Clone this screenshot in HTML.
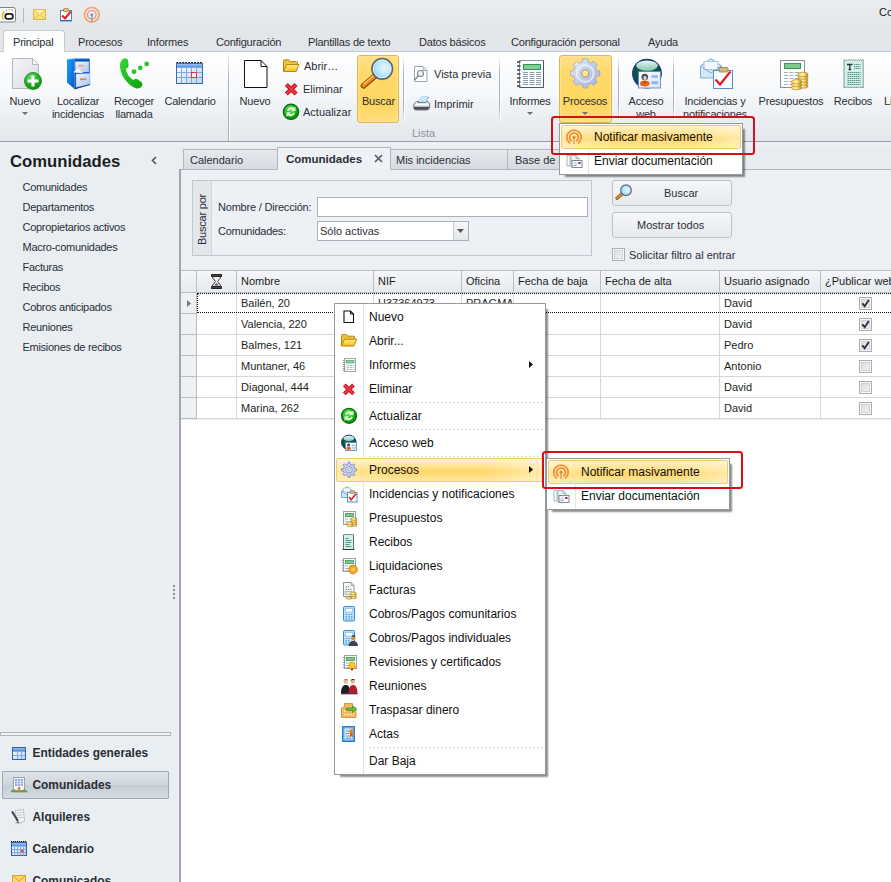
<!DOCTYPE html>
<html lang="es">
<head>
<meta charset="utf-8">
<title>Comunidades</title>
<style>
*{box-sizing:border-box;margin:0;padding:0}
html,body{width:891px;height:882px;overflow:hidden;background:#fff}
body{font-family:"Liberation Sans",sans-serif;font-size:11px;color:#2b2f36;position:relative}
.abs{position:absolute}
.t{position:absolute;white-space:nowrap;line-height:13px}
.c{text-align:center;letter-spacing:-.2px}
svg{position:absolute;overflow:visible}
/* title + tabs */
#titlebar{left:0;top:0;width:891px;height:52px;background:linear-gradient(#eaecef 0,#e4e7ea 26px,#e2e5e9 52px)}
#ribbon{left:0;top:51px;width:891px;height:91px;background:linear-gradient(#ffffff 0,#f6f8fa 40px,#e9edf1 70px,#e4e8ed 88px);border-top:1px solid #c5cad1;border-bottom:1px solid #989ea6}
#ribbonshadow{left:0;top:142px;width:891px;height:8px;background:linear-gradient(#eef1f5,#e8ecf0)}
#tabP{left:3px;top:30px;width:62px;height:22px;background:linear-gradient(#fbfcfd,#ffffff);border:1px solid #c5cad1;border-bottom:none;border-radius:3px 3px 0 0}
.rt{top:36px;font-size:11px;letter-spacing:-.2px}
.rsep{width:1px;top:56px;height:66px;background:linear-gradient(rgba(170,176,186,0),#aab0ba 25%,#aab0ba 75%,rgba(170,176,186,0));box-shadow:1px 0 0 rgba(255,255,255,.8)}
.gsep{width:1px;top:53px;height:88px;background:linear-gradient(rgba(168,173,180,.15),#a8adb4 35%);box-shadow:1px 0 0 rgba(255,255,255,.85)}
.hot{background:linear-gradient(#ffe089 0,#ffd96b 25%,#ffd660 75%,#ffe07f 100%);border:1px solid #dbb654;border-radius:3px;box-shadow:inset 0 0 0 1px rgba(255,232,160,.6)}
/* left nav */
#nav{left:0;top:149px;width:179px;height:733px;background:#e9eef3}
#navborder{z-index:1;left:179px;top:169px;width:2px;height:713px;background:linear-gradient(90deg,#a8adb3,#9b9fa5)}
.ni{left:22.500px;font-size:11px;letter-spacing:-.28px}
.nb{left:32.5px;font-size:11.9px;font-weight:bold;color:#2a2e35;line-height:15px}
/* main */
#main{left:179px;top:149px;width:712px;height:733px;background:#e8ecf0}
#white{left:181px;top:420px;width:710px;height:463px;background:#fff}
.tab{top:149px;height:21px;background:linear-gradient(#e6e9ed,#d6dae0);border:1px solid #b2b7be;border-bottom:none}
.btn{background:linear-gradient(#f5f7f9,#e7eaee);border:1px solid #bcc1c8;border-radius:3px}
.gh{top:271px;height:22px;background:linear-gradient(#f4f6f8,#e7eaee);border-right:1px solid #b9bec5;border-bottom:1px solid #b9bec5}
.gc{height:21px;background:#fff;border-right:1px solid #d3d6da;border-bottom:1px solid #d3d6da}
.gt{font-size:11px;color:#1c1e22}
.cb{width:13px;height:13px;border:1px solid #a9aeb5;background:#f6f7f8;box-shadow:inset 0 0 0 1px #f6f7f8,inset 0 0 0 2px #cfd2d6}
.cb::after{content:"";position:absolute;left:2px;top:2px;width:7px;height:7px;background:linear-gradient(135deg,#dcdee1,#f0f1f2)}
/* menus */
.menu{background:#fff;border:1px solid #94989f;box-shadow:4px 4px 1.500px -2px rgba(0,0,0,.44)}
.mi{font-family:"Liberation Sans",sans-serif;font-size:12px;color:#111;line-height:15px}
.msep{height:1px;background:repeating-linear-gradient(90deg,#d3d6db 0,#d3d6db 2px,transparent 2px,transparent 4px)}
.mhot{background:linear-gradient(90deg,rgba(255,250,225,.45),rgba(255,250,225,0) 28%,rgba(255,250,225,0) 72%,rgba(255,250,225,.5)),linear-gradient(#fff1c4 0,#ffe08a 40%,#ffd767 55%,#ffe7a3 100%);border:1px solid #efcb6a;border-radius:2px}
.red{border:2px solid #d41018;border-radius:3.500px}
</style>
</head>
<body>
<div id="titlebar" class="abs"></div>
<div id="ribbon" class="abs"></div>
<div id="ribbonshadow" class="abs"></div>
<div id="tabP" class="abs"></div>

<!-- quick access icons -->
<svg style="left:0;top:0" width="120" height="30" viewBox="0 0 120 30">
<rect x="-2" y="7.500" width="17.500" height="14.500" rx="2" fill="#fbfbfb" stroke="#7f848b"/>
<path d="M3.200 19.500c-1.200-3-.8-6 1-8.500" stroke="#e8b820" stroke-width="1.500" fill="none"/>
<circle cx="6.500" cy="10.300" r=".7" fill="#8a8f96"/><circle cx="9.300" cy="9.600" r=".7" fill="#c8a030"/><circle cx="12" cy="10.300" r=".7" fill="#8a8f96"/>
<rect x="5.300" y="13.800" width="7.600" height="5" rx="2.400" fill="#fff" stroke="#1c1c1c" stroke-width="1.700"/>
<path d="M23.500 8v15" stroke="#b4b9c0"/>
<rect x="33.500" y="9.500" width="12" height="10" fill="#fbe07a" stroke="#e0b23a" stroke-width=".9"/>
<path d="M34 10l5.500 5 5.500-5M34 19l4.200-4.200M45 19l-4.200-4.200" stroke="#e0b23a" stroke-width=".8" fill="none"/>
<path d="M34.200 10h10.600l-5.300 4.600z" fill="#fdf0b0"/>
<rect x="60.500" y="10.500" width="11" height="10.500" fill="#f6f8fb" stroke="#5a7fb8"/>
<path d="M61 20.500h10" stroke="#3a64a8" stroke-width="1"/>
<rect x="63.500" y="8.500" width="5" height="3" rx=".8" fill="#dcc078" stroke="#a08038" stroke-width=".8"/>
<path d="M62.200 15.500l2.800 3 5.800-7" stroke="#e02418" stroke-width="2" fill="none"/>
<g transform="translate(91.800 14.800)" fill="none">
<circle r="7.300" stroke="#f2a464" stroke-width="1.700"/>
<circle r="4.300" stroke="#e88a82" stroke-width="1.200"/>
<path d="M0 0v7.500" stroke="#a0a4ac" stroke-width="1.600"/>
<circle r="1.400" fill="#8c9098"/></g>
</svg>
<div class="t" style="left:879px;top:6px;font-size:11px;color:#1a1a1a">Co</div>
<!-- ribbon tabs -->
<div class="t rt" style="left:13px">Principal</div>
<div class="t rt" style="left:78px">Procesos</div>
<div class="t rt" style="left:147px">Informes</div>
<div class="t rt" style="left:216px">Configuración</div>
<div class="t rt" style="left:308px">Plantillas de texto</div>
<div class="t rt" style="left:419px">Datos básicos</div>
<div class="t rt" style="left:511px">Configuración personal</div>
<div class="t rt" style="left:648px">Ayuda</div>
<!-- hot buttons -->
<div class="abs hot" style="left:357px;top:55px;width:42px;height:68px"></div>
<div class="abs hot" style="left:559px;top:55px;width:53px;height:68px"></div>
<!-- separators -->
<div class="abs gsep" style="left:228px"></div>
<div class="abs rsep" style="left:403px"></div>
<div class="abs rsep" style="left:499px"></div>
<div class="abs rsep" style="left:618px"></div>
<div class="abs rsep" style="left:673px"></div>
<!-- big buttons text -->
<div class="t c" style="left:0;width:50px;top:95px">Nuevo</div>
<div class="t c" style="left:48px;width:60px;top:95px">Localizar<br>incidencias</div>
<div class="t c" style="left:104px;width:60px;top:95px">Recoger<br>llamada</div>
<div class="t c" style="left:160px;width:60px;top:95px">Calendario</div>
<div class="t c" style="left:230px;width:50px;top:95px">Nuevo</div>
<div class="t" style="left:304px;top:60px">Abrir…</div>
<div class="t" style="left:303px;top:83px">Eliminar</div>
<div class="t" style="left:303px;top:106px">Actualizar</div>
<div class="t c" style="left:357px;width:43px;top:95px">Buscar</div>
<div class="t" style="left:434px;top:68px">Vista previa</div>
<div class="t" style="left:434px;top:98px">Imprimir</div>
<div class="t" style="left:412px;top:127px;color:#8c939c">Lista</div>
<div class="t c" style="left:500px;width:60px;top:95px">Informes</div>
<div class="t c" style="left:555px;width:60px;top:95px">Procesos</div>
<div class="t c" style="left:621px;width:50px;top:95px">Acceso<br>web</div>
<div class="t c" style="left:675px;width:80px;top:95px">Incidencias y<br>notificaciones</div>
<div class="t c" style="left:751px;width:80px;top:95px">Presupuestos</div>
<div class="t c" style="left:823px;width:60px;top:95px">Recibos</div>
<div class="t" style="left:884px;top:95px">Li</div>
<!-- dropdown arrows -->
<svg style="left:22px;top:112px" width="6" height="3"><path d="M0 0h6L3 3z" fill="#6a6f78"/></svg>
<svg style="left:527px;top:112px" width="6" height="3"><path d="M0 0h6L3 3z" fill="#6a6f78"/></svg>
<svg style="left:582px;top:112px" width="6" height="3"><path d="M0 0h6L3 3z" fill="#6a6f78"/></svg>

<svg style="left:0;top:0" width="891" height="150" viewBox="0 0 891 150">
<defs>
<linearGradient id="gPage" x1="0" y1="0" x2="1" y2="1"><stop offset="0" stop-color="#f4f5f8"/><stop offset="1" stop-color="#d9dce4"/></linearGradient>
<radialGradient id="gGreen" cx=".4" cy=".3" r=".8"><stop offset="0" stop-color="#6be06b"/><stop offset=".6" stop-color="#18a818"/><stop offset="1" stop-color="#0b7d0b"/></radialGradient>
<linearGradient id="gBlue" x1="0" y1="0" x2="1" y2="1"><stop offset="0" stop-color="#18a0f8"/><stop offset=".6" stop-color="#0c78e0"/><stop offset="1" stop-color="#0a54b8"/></linearGradient>
<linearGradient id="gDrawer" x1="0" y1="0" x2="1" y2="1"><stop offset="0" stop-color="#f2f8ff"/><stop offset="1" stop-color="#a8c4ea"/></linearGradient>
<linearGradient id="gFolder" x1="0" y1="0" x2="0" y2="1"><stop offset="0" stop-color="#fff08a"/><stop offset="1" stop-color="#f8bc18"/></linearGradient>
<radialGradient id="gLens" cx=".6" cy=".45" r=".75"><stop offset="0" stop-color="#e8f8fe"/><stop offset=".5" stop-color="#b4e6f8"/><stop offset="1" stop-color="#6cc4ec"/></radialGradient>
<linearGradient id="gGear" x1="0" y1="0" x2="1" y2="1"><stop offset="0" stop-color="#f2f5fb"/><stop offset=".45" stop-color="#c3cfec"/><stop offset="1" stop-color="#a3b1d8"/></linearGradient>
<radialGradient id="gGlobe" cx=".45" cy=".25" r=".85"><stop offset="0" stop-color="#8fd8c0"/><stop offset=".35" stop-color="#2a7a78"/><stop offset=".75" stop-color="#144268"/><stop offset="1" stop-color="#0c2848"/></radialGradient>
<linearGradient id="gCal" x1="0" y1="0" x2="1" y2="1"><stop offset="0" stop-color="#ffffff"/><stop offset="1" stop-color="#b8d4f4"/></linearGradient>
<radialGradient id="gGlobe2" cx=".5" cy=".45" r=".6"><stop offset="0" stop-color="#1c7a4a"/><stop offset=".6" stop-color="#0c5a3a"/><stop offset=".85" stop-color="#0c4a6a"/><stop offset="1" stop-color="#1c58a8"/></radialGradient>
<linearGradient id="gGloss" x1="0" y1="0" x2="0" y2="1"><stop offset="0" stop-color="#ffffff" stop-opacity=".95"/><stop offset="1" stop-color="#a8e8e0" stop-opacity=".75"/></linearGradient>
<linearGradient id="gCard" x1="0" y1="0" x2="1" y2="1"><stop offset="0" stop-color="#ffffff"/><stop offset="1" stop-color="#d4e4f8"/></linearGradient>
<linearGradient id="gCalH" x1="0" y1="0" x2="0" y2="1"><stop offset="0" stop-color="#9cc4f4"/><stop offset="1" stop-color="#4a8cdc"/></linearGradient>
<linearGradient id="gPhone" x1="0" y1="0" x2="1" y2="1"><stop offset="0" stop-color="#3cd83c"/><stop offset=".5" stop-color="#1cbc1c"/><stop offset="1" stop-color="#12a012"/></linearGradient>
<linearGradient id="gGold" x1="0" y1="0" x2="1" y2="0"><stop offset="0" stop-color="#f8d060"/><stop offset=".5" stop-color="#fff0a0"/><stop offset="1" stop-color="#c89018"/></linearGradient>
</defs>
<!-- Nuevo (page + plus) -->
<path d="M12.500 58.500h20l6 6v24h-26z" fill="url(#gPage)" stroke="#b4b7bf"/>
<path d="M32.500 58.500v6h6z" fill="#fafbfc" stroke="#b4b7bf"/>
<circle cx="33" cy="81" r="8.500" fill="url(#gGreen)" stroke="#0e8a0e" stroke-width=".8"/>
<path d="M33 75.500v11M27.500 81h11" stroke="#fff" stroke-width="3"/>
<!-- Localizar (file cabinet) -->
<path d="M67 59.600l7.500-.8v30.200l-7.500-6.500z" fill="url(#gBlue)"/>
<path d="M74.500 58.800h15.200v25.700l-15.200 4.500z" fill="#0c4cae"/>
<path d="M67 59.600l7.500-.8h15.200" fill="none" stroke="#4aa6f6" stroke-width=".8"/>
<path d="M75.300 61.500h13.600v10.500l-13.600.8z" fill="url(#gDrawer)"/>
<rect x="78.300" y="64.800" width="5.400" height="1.700" fill="#e6a488"/>
<path d="M73.300 72.300l4.500-4 5.200 4.600z" fill="#f6fafe"/>
<path d="M76 74l14-.8v11.800l-14 2.200z" fill="url(#gDrawer)" stroke="#7aa4dc" stroke-width=".5"/>
<path d="M80 78.500l6-.3v1.700l-6 .3z" fill="#e08a2c"/>
<path d="M74.500 89l15.200-4.500" stroke="#0a3a8c" stroke-width="1"/>
<!-- Recoger llamada (phone) -->
<path d="M124 58.500c2.500-1 4 .5 4.200 3l.3 4c.1 1.800-1 2.800-2.700 3.200 .8 5 3.500 9 7.700 11.500 1.200-1.500 2.800-1.800 4.300-.8l3.200 2.300c1.800 1.300 2 3.300.2 5.300-3 2.800-7.500 1.200-12-2.800-6-5.500-9.500-13-9.200-19.500 .2-3 1.500-5.200 4-6.200z" fill="url(#gPhone)"/>
<circle cx="134" cy="71.700" r="2.400" fill="#2cc42c"/><circle cx="140.300" cy="67.800" r="2.400" fill="#2cc42c"/><circle cx="146.700" cy="64" r="2.400" fill="#2cc42c"/>
<!-- Calendario -->
<rect x="176.500" y="63.500" width="26" height="20" fill="url(#gCal)" stroke="#3a6ab4"/>
<rect x="177" y="64" width="25" height="3.500" fill="url(#gCalH)"/>
<path d="M176.500 62.500h26.500" stroke="#111" stroke-width="1.200" stroke-dasharray="1.700 1.250"/>
<path d="M181.500 68v15M186.500 68v15M191.500 68v15M196.500 68v15M177 72.500h25M177 77.500h25M177 67.500h25" stroke="#7da8e2" stroke-width="1"/>
<rect x="191.500" y="72.500" width="5" height="5" fill="#fdeeea" stroke="#e0382a" stroke-width="1"/>
<!-- Nuevo list (blank page) -->
<path d="M244.500 60.500h16.500l6 6v21h-22.500z" fill="#fff" stroke="#111"/>
<path d="M261 60.500v6h6" fill="none" stroke="#111"/>
<!-- Abrir (folder) -->
<path d="M283.500 71.500v-10.500c0-.8.500-1.200 1.200-1.200h4l1.500 1.800h6.300c.7 0 1 .4 1 1v2" fill="#f2c040" stroke="#b8860c"/>
<path d="M283.500 71.500l3-7h12.500l-3 7z" fill="url(#gFolder)" stroke="#b8860c"/>
<!-- Eliminar (red X) -->
<path d="M286.300 84.500l9.800 9.600M296.100 84.500l-9.800 9.600" stroke="#c4121a" stroke-width="4.200"/><path d="M286.600 84.800l9.200 9M295.800 84.800l-9.200 9" stroke="#ee3840" stroke-width="2.200"/>
<!-- Actualizar -->
<circle cx="291" cy="111.800" r="7.600" fill="url(#gGreen)" stroke="#0a7410" stroke-width="1.400"/>
<path d="M287 110.500a4.500 4.500 0 0 1 7-2.500l1.500-1.500v4.800h-4.800l1.600-1.600a2.800 2.800 0 0 0-3.600 1.300zM295 113a4.500 4.500 0 0 1-7 2.500l-1.500 1.500v-4.800h4.800l-1.600 1.600a2.800 2.800 0 0 0 3.600-1.300z" fill="#d6fac4"/>
<!-- Buscar (magnifier) -->
<path d="M375 76l-11.500 9.800" stroke="#7a4a14" stroke-width="5.600" stroke-linecap="round"/>
<path d="M375 75.800l-11.300 9.600" stroke="#f08c1e" stroke-width="3.800" stroke-linecap="round"/>
<path d="M374.500 74.800l-10.500 9" stroke="#ffc060" stroke-width="1.200" stroke-linecap="round"/>
<circle cx="382.200" cy="68.800" r="10.200" fill="url(#gLens)" stroke="#5f6670" stroke-width="1.800"/>
<circle cx="382.200" cy="68.800" r="9" fill="none" stroke="#e8f8ff" stroke-width="1" opacity=".8"/>
<!-- Vista previa -->
<path d="M414.500 66.500h8.500l4 4v11h-12.500z" fill="#fff" stroke="#a0a5ad"/>
<path d="M423 66.500v4h4" fill="none" stroke="#a0a5ad"/>
<circle cx="420.500" cy="73.500" r="3" fill="#eef4fa" stroke="#7f8a98" stroke-width="1.100"/>
<path d="M418.300 75.800l-4 4.500" stroke="#7f8a98" stroke-width="1.500"/>
<!-- Imprimir -->
<path d="M418 102.500l3.500-5.500h7l-2.500 5.500z" fill="#c4e4fa" stroke="#78aedc" stroke-width=".8"/>
<path d="M419.500 101l2.200-3.200h5" fill="none" stroke="#eef8ff" stroke-width=".8"/>
<path d="M413.800 104l2.700-2.500h2l-.5 1h8l.5-1h1.500l1.700 2.500v3.800l-1.800 2.200h-12.600l-1.500-1.500z" fill="#e4e7ec" stroke="#6a707a" stroke-width=".9"/>
<path d="M414 106.800h15.300v1l-1.600 2h-12.500l-1.200-1.200z" fill="#4a4f58"/>
<path d="M416 104.500h11" stroke="#fafbfc" stroke-width="1"/>
<!-- Informes (notebook) -->
<rect x="519.500" y="60.500" width="24" height="27" fill="#fbfdff" stroke="#8a929c"/>
<path d="M543.500 60.500v27h-24" fill="none" stroke="#4f5a66" stroke-width="1"/>
<path d="M517 62h3.500M517 66h3.500M517 70h3.500M517 74h3.500M517 78h3.500M517 82h3.500M517 86h3.500" stroke="#3c424a" stroke-width="1.300"/>
<rect x="523.500" y="64.500" width="17" height="5" fill="#86cc98" stroke="#2f9650"/>
<path d="M523 72.500h18M523 74.500h18M523 76.500h18M523 78.500h18M523 80.500h18M523 82.500h18M523 84.500h18" stroke="#8c9cac" stroke-width="1" stroke-dasharray="5 1.500"/>
<!-- Procesos (gear) -->
<g transform="translate(585.200 73.400)">
<path d="M-2.84 -11.45L-2.43 -14.60L2.43 -14.60L2.84 -11.45L6.09 -10.11L8.60 -12.04L12.04 -8.60L10.11 -6.09L11.45 -2.84L14.60 -2.43L14.60 2.43L11.45 2.84L10.11 6.09L12.04 8.60L8.60 12.04L6.09 10.11L2.84 11.45L2.43 14.60L-2.43 14.60L-2.84 11.45L-6.09 10.11L-8.60 12.04L-12.04 8.60L-10.11 6.09L-11.45 2.84L-14.60 2.43L-14.60 -2.43L-11.45 -2.84L-10.11 -6.09L-12.04 -8.60L-8.60 -12.04L-6.09 -10.11z" fill="url(#gGear)" stroke="#9aa4c4" stroke-width=".8" stroke-linejoin="round"/>
<circle r="8.400" fill="none" stroke="#eef1f9" stroke-width="2" opacity=".75"/>
<circle r="3.600" fill="#ffe596" stroke="#a89a70" stroke-width="1.100"/>
</g>
<!-- Acceso web (globe + card) -->
<circle cx="647" cy="73.600" r="14.300" fill="url(#gGlobe2)" stroke="#1c3f7c" stroke-width="1.300"/>
<ellipse cx="647" cy="65.600" rx="10.800" ry="5.200" fill="url(#gGloss)"/>
<rect x="638.500" y="71.500" width="22" height="16.500" fill="url(#gCard)" stroke="#5f80b8" stroke-width=".8"/>
<circle cx="644.800" cy="77" r="3.300" fill="#505056"/>
<ellipse cx="645" cy="78" rx="1.600" ry="1.900" fill="#dcdce0"/>
<ellipse cx="644.800" cy="83.400" rx="4.800" ry="3" fill="#e8641c"/>
<path d="M643.500 81l1.300 2.500 1.300-2.500" fill="none" stroke="#a83c08" stroke-width=".8"/>
<rect x="651.500" y="75.300" width="6.500" height="2.400" fill="#8cb6ea"/>
<rect x="651.500" y="81.200" width="6.500" height="3" fill="#8cb6ea"/>
<!-- Incidencias (envelope + clipboard) -->
<path d="M700.500 66l10.500-7.500 10.500 7.500v12h-21z" fill="#d4e8f8" stroke="#7ab0dc"/>
<rect x="704" y="61.500" width="14" height="8" fill="#f4f8fc" stroke="#9ac0e0" stroke-width=".8"/>
<path d="M700.500 66l10.500 7 10.500-7" fill="none" stroke="#7ab0dc"/>
<rect x="713.500" y="70.500" width="19" height="18" fill="#fafcfe" stroke="#5a8ed0"/>
<rect x="719" y="67.500" width="9" height="4.500" rx="1" fill="#d8b878" stroke="#9a7a3a" stroke-width=".8"/>
<path d="M715.500 79.500l4.500 5 10.500-13" fill="none" stroke="#e01c24" stroke-width="2.200"/>
<!-- Presupuestos -->
<rect x="780.500" y="60.500" width="24" height="27" fill="#fdfdfd" stroke="#8a9098"/>
<rect x="784.500" y="63.500" width="16" height="5" fill="#7cc890" stroke="#3c9a58"/>
<path d="M784 72.500h17M784 75.500h17M784 78.500h17M784 81.500h17M784 84.500h17" stroke="#a8aeb6" stroke-width="1.200" stroke-dasharray="4 1.500"/>
<g stroke="#a87410" stroke-width=".6">
<ellipse cx="803" cy="86" rx="5" ry="2.200" fill="url(#gGold)"/><ellipse cx="803" cy="83" rx="5" ry="2.200" fill="url(#gGold)"/><ellipse cx="803" cy="80" rx="5" ry="2.200" fill="url(#gGold)"/><ellipse cx="803" cy="77" rx="5" ry="2.200" fill="url(#gGold)"/><ellipse cx="803" cy="74.500" rx="5" ry="2.200" fill="url(#gGold)"/>
<ellipse cx="796.500" cy="87.500" rx="5" ry="2.200" fill="url(#gGold)"/><ellipse cx="796.500" cy="84.500" rx="5" ry="2.200" fill="url(#gGold)"/><ellipse cx="796.500" cy="81.800" rx="5" ry="2.200" fill="url(#gGold)"/>
</g>
<!-- Recibos -->
<path d="M844 59.500l1.200 1.200 1.200-1.200 1.200 1.200 1.200-1.200 1.200 1.200 1.200-1.200 1.200 1.200 1.200-1.200 1.200 1.200 1.200-1.200 1.200 1.200 1.200-1.200 1.200 1.200 1.200-1.200 1.200 1.200 1.200-1.200v28.500l-1.200-1.200-1.200 1.200-1.200-1.200-1.200 1.200-1.200-1.200-1.200 1.200-1.200-1.200-1.200 1.200-1.200-1.200-1.200 1.200-1.200-1.200-1.200 1.200-1.200-1.200-1.200 1.200-1.200-1.200-1.200 1.200z" fill="#d6efe8" stroke="#5a7a74" stroke-width=".7"/>
<path d="M847.500 72.500h13M847.500 74.500h13M847.500 76.500h13M847.500 78.500h13M847.500 80.500h13M847.500 82.500h13M847.500 84.500h13M854 64.500h6.500M854 66.500h6.500M854 68.500h6.500" stroke="#4f9488" stroke-width="1" stroke-dasharray="1.500 .5"/>
<path d="M847 64.500h5.500M849.800 64.500v5M848.500 69.500h2.600" stroke="#1a3a38" stroke-width="1.300"/>
</svg>


<div id="nav" class="abs"></div>
<div id="navborder" class="abs"></div>
<div id="main" class="abs"></div>
<div id="white" class="abs"></div>

<div class="t" style="left:10px;top:151px;font-size:16.700px;font-weight:bold;line-height:22px;color:#1e1e1e">Comunidades</div>
<svg style="left:151px;top:156px" width="6" height="9"><path d="M5 1L1.500 4.500 5 8" stroke="#555" stroke-width="1.600" fill="none"/></svg>
<div class="t ni" style="top:181px">Comunidades</div>
<div class="t ni" style="top:201px">Departamentos</div>
<div class="t ni" style="top:221px">Copropietarios activos</div>
<div class="t ni" style="top:241px">Macro-comunidades</div>
<div class="t ni" style="top:261px">Facturas</div>
<div class="t ni" style="top:281px">Recibos</div>
<div class="t ni" style="top:301px">Cobros anticipados</div>
<div class="t ni" style="top:321px">Reuniones</div>
<div class="t ni" style="top:341px">Emisiones de recibos</div>

<div class="abs" style="left:0;top:732px;width:171px;height:4px;border:1px solid #b0b5bc;background:#f2f4f7"></div>
<div class="abs" style="left:2px;top:771px;width:167px;height:28px;border:1px solid #9ea6b0;border-radius:1px;background:linear-gradient(#dfe4ea 0,#cfd5dc 50%,#c5ccd4 52%,#d6dbe1 100%)"></div>
<div class="t nb" style="top:746px">Entidades generales</div>
<div class="t nb" style="top:778px">Comunidades</div>
<div class="t nb" style="top:810px">Alquileres</div>
<div class="t nb" style="top:842px">Calendario</div>
<div class="t nb" style="top:874px">Comunicados</div>
<!-- splitter dots -->
<div class="abs" style="left:173px;top:585px;width:2px;height:14px;background:repeating-linear-gradient(#8a8d92 0,#8a8d92 2px,transparent 2px,transparent 4px)"></div>

<svg style="left:0;top:740px" width="180" height="142" viewBox="0 740 180 142">
<!-- Entidades generales (table) -->
<rect x="12.500" y="747.500" width="13" height="12" fill="url(#gCal)" stroke="#2f5eaa"/>
<rect x="13" y="748" width="12" height="3" fill="url(#gCalH)"/>
<path d="M13 751.500h12M13 755.500h12M17.500 752v7M21.500 752v7" stroke="#86aae0" stroke-width="1"/>
<!-- Comunidades (building) -->
<rect x="13.500" y="777.500" width="11" height="13" fill="#f4f6fa" stroke="#98a2b4"/>
<rect x="15" y="779" width="8" height="7" fill="#8ea8d4"/>
<path d="M17.500 779v7M20.500 779v7M15 781.500h8M15 783.800h8" stroke="#e8eef8" stroke-width=".8"/>
<rect x="17.800" y="787" width="2.600" height="4" fill="#e08a30"/>
<path d="M11 792c.8-2.800 4-3 5.800-.4h4.600c1.800-2.600 5-2.400 5.800.4z" fill="#62b83c" stroke="#3c8c24" stroke-width=".5"/>
<!-- Alquileres (docs + pen) -->
<path d="M15.500 810.500l8-1 1 12-8 2z" fill="#f4f5f8" stroke="#b0b4bc" stroke-width=".8"/>
<path d="M17 813l5.500-.7M17.200 815.500l5.500-.7M17.400 818l5.500-.7" stroke="#b8bcc4" stroke-width=".8"/>
<path d="M12 811.500l6 9.500" stroke="#3a3f48" stroke-width="2"/><path d="M18 821l1.200 2.500-2.400-1.300z" fill="#222"/>
<path d="M14 823.500c2 .5 5 .5 8-.5" stroke="#c8ccd2" stroke-width=".8" fill="none"/>
<!-- Calendario -->
<rect x="11.500" y="842.500" width="15" height="13" fill="url(#gCal)" stroke="#2f5eaa"/>
<rect x="12" y="843" width="14" height="3.500" fill="url(#gCalH)"/>
<path d="M11 841.500h16" stroke="#111" stroke-width="1.200" stroke-dasharray="1.200 .8"/>
<path d="M12 849.500h14M12 852.500h14M14.500 846.500v9M17.500 846.500v9M20.500 846.500v9M23.500 846.500v9" stroke="#86aae0" stroke-width="1"/>
<rect x="21" y="850" width="2.500" height="2.500" fill="#f04a30"/>
<!-- Comunicados (envelope) -->
<rect x="12.500" y="875.500" width="13" height="9" fill="#fbd86a" stroke="#d9a520"/>
<path d="M13 876l6 5 6-5" stroke="#d9a520" fill="none"/>
</svg>




<!-- doc tabs -->
<div class="abs tab" style="left:183px;width:95px"></div>
<div class="abs tab" style="left:390px;width:118px"></div>
<div class="abs tab" style="left:507px;width:120px"></div>
<div class="abs" style="left:181px;top:169px;width:710px;height:1px;background:#b2b7be"></div><div class="abs" style="left:181px;top:170px;width:710px;height:100px;background:#ecf0f4"></div>
<div class="abs" style="left:277px;top:147px;width:114px;height:23px;background:#eef1f5;border:1px solid #b2b7be;border-bottom:none"></div>
<div class="t" style="left:190px;top:154px">Calendario</div>
<div class="t" style="left:286px;top:153px;font-weight:bold;font-size:11.5px">Comunidades</div>
<svg style="left:374px;top:154px" width="9" height="9"><path d="M1 1l7 7M8 1L1 8" stroke="#575c64" stroke-width="1.700"/></svg>
<div class="t" style="left:396px;top:154px">Mis incidencias</div>
<div class="t" style="left:515px;top:154px">Base de c</div>
<!-- filter panel -->
<div class="abs" style="left:192px;top:180px;width:400px;height:76px;border:1px solid #c3c8cf;background:#edf0f4"></div>
<div class="abs" style="left:193px;top:181px;width:19px;height:74px;background:#e3e7ec;border-right:1px solid #d3d7dd"></div>
<div class="t" style="left:202px;top:220px;width:0;height:0;letter-spacing:-.2px"><div style="position:absolute;left:-30px;top:-7px;width:60px;height:13px;text-align:center;transform:rotate(-90deg)">Buscar por</div></div>
<div class="t" style="left:218px;top:201px;letter-spacing:-.2px">Nombre / Dirección:</div>
<div class="t" style="left:218px;top:225px;letter-spacing:-.25px">Comunidades:</div>
<div class="abs" style="left:317px;top:197px;width:271px;height:20px;background:#fff;border:1px solid #abb0b8"></div>
<div class="abs" style="left:317px;top:221px;width:152px;height:20px;background:#fff;border:1px solid #abb0b8"></div>
<div class="abs" style="left:453px;top:222px;width:15px;height:18px;background:linear-gradient(#f7f8fa,#e4e7eb);border-left:1px solid #c3c8cf"></div>
<svg style="left:457px;top:229px" width="7" height="4"><path d="M0 0h7L3.500 4z" fill="#555"/></svg>
<div class="t" style="left:320px;top:225px">Sólo activas</div>
<!-- buttons -->
<div class="abs btn" style="left:612px;top:180px;width:120px;height:26px"></div>
<div class="abs btn" style="left:612px;top:212px;width:120px;height:26px"></div>
<div class="t" style="left:664px;top:187px">Buscar</div>
<div class="t" style="left:637px;top:219px">Mostrar todos</div>
<div class="abs cb" style="left:612px;top:248px"></div>
<div class="t" style="left:629px;top:249px">Solicitar filtro al entrar</div>
<!-- grid -->
<div class="abs" style="left:180px;top:270px;width:711px;height:1px;background:#b9bec5"></div>
<div class="abs gh" style="left:181px;width:16px"></div>
<div class="abs gh" style="left:197px;width:40px"></div>
<div class="abs gh" style="left:237px;width:137px"></div><div class="t gt" style="left:241px;top:275px">Nombre</div>
<div class="abs gh" style="left:374px;width:88px"></div><div class="t gt" style="left:378px;top:275px">NIF</div>
<div class="abs gh" style="left:462px;width:52px"></div><div class="t gt" style="left:466px;top:275px">Oficina</div>
<div class="abs gh" style="left:514px;width:87px"></div><div class="t gt" style="left:518px;top:275px">Fecha de baja</div>
<div class="abs gh" style="left:601px;width:119px"></div><div class="t gt" style="left:605px;top:275px">Fecha de alta</div>
<div class="abs gh" style="left:720px;width:101px"></div><div class="t gt" style="left:724px;top:275px">Usuario asignado</div>
<div class="abs gh" style="left:821px;width:75px"></div><div class="t gt" style="left:825px;top:275px">¿Publicar web</div>
<div class="abs gh" style="left:181px;top:293px;width:16px;height:21px;background:#eef0f3"></div><div class="abs gc" style="left:197px;top:293px;width:40px;border-bottom-color:#fff"></div><div class="abs gc" style="left:237px;top:293px;width:137px;border-bottom-color:#fff"></div><div class="abs gc" style="left:374px;top:293px;width:88px;border-bottom-color:#fff"></div><div class="abs gc" style="left:462px;top:293px;width:52px;border-bottom-color:#fff"></div><div class="abs gc" style="left:514px;top:293px;width:87px;border-bottom-color:#fff"></div><div class="abs gc" style="left:601px;top:293px;width:119px;border-bottom-color:#fff"></div><div class="abs gc" style="left:720px;top:293px;width:101px;border-bottom-color:#fff"></div><div class="abs gc" style="left:821px;top:293px;width:75px;border-bottom-color:#fff"></div><div class="t gt" style="left:241px;top:297px">Bailén, 20</div><div class="t gt" style="left:378px;top:297px">H37364973</div><div class="t gt" style="left:466px;top:297px">PRAGMA</div><div class="t gt" style="left:724px;top:297px">David</div><div class="abs cb" style="left:859px;top:297px"></div><svg style="left:861px;top:299px" width="9" height="9"><path d="M1.300 4.300l2.400 2.900L7.800 1" stroke="#2e333c" stroke-width="1.900" fill="none"/></svg>
<div class="abs gh" style="left:181px;top:314px;width:16px;height:21px;background:#eef0f3"></div><div class="abs gc" style="left:197px;top:314px;width:40px"></div><div class="abs gc" style="left:237px;top:314px;width:137px"></div><div class="abs gc" style="left:374px;top:314px;width:88px"></div><div class="abs gc" style="left:462px;top:314px;width:52px"></div><div class="abs gc" style="left:514px;top:314px;width:87px"></div><div class="abs gc" style="left:601px;top:314px;width:119px"></div><div class="abs gc" style="left:720px;top:314px;width:101px"></div><div class="abs gc" style="left:821px;top:314px;width:75px"></div><div class="t gt" style="left:241px;top:318px">Valencia, 220</div><div class="t gt" style="left:724px;top:318px">David</div><div class="abs cb" style="left:859px;top:318px"></div><svg style="left:861px;top:320px" width="9" height="9"><path d="M1.300 4.300l2.400 2.900L7.800 1" stroke="#2e333c" stroke-width="1.900" fill="none"/></svg>
<div class="abs gh" style="left:181px;top:335px;width:16px;height:21px;background:#eef0f3"></div><div class="abs gc" style="left:197px;top:335px;width:40px"></div><div class="abs gc" style="left:237px;top:335px;width:137px"></div><div class="abs gc" style="left:374px;top:335px;width:88px"></div><div class="abs gc" style="left:462px;top:335px;width:52px"></div><div class="abs gc" style="left:514px;top:335px;width:87px"></div><div class="abs gc" style="left:601px;top:335px;width:119px"></div><div class="abs gc" style="left:720px;top:335px;width:101px"></div><div class="abs gc" style="left:821px;top:335px;width:75px"></div><div class="t gt" style="left:241px;top:339px">Balmes, 121</div><div class="t gt" style="left:724px;top:339px">Pedro</div><div class="abs cb" style="left:859px;top:339px"></div><svg style="left:861px;top:341px" width="9" height="9"><path d="M1.300 4.300l2.400 2.900L7.800 1" stroke="#2e333c" stroke-width="1.900" fill="none"/></svg>
<div class="abs gh" style="left:181px;top:356px;width:16px;height:21px;background:#eef0f3"></div><div class="abs gc" style="left:197px;top:356px;width:40px"></div><div class="abs gc" style="left:237px;top:356px;width:137px"></div><div class="abs gc" style="left:374px;top:356px;width:88px"></div><div class="abs gc" style="left:462px;top:356px;width:52px"></div><div class="abs gc" style="left:514px;top:356px;width:87px"></div><div class="abs gc" style="left:601px;top:356px;width:119px"></div><div class="abs gc" style="left:720px;top:356px;width:101px"></div><div class="abs gc" style="left:821px;top:356px;width:75px"></div><div class="t gt" style="left:241px;top:360px">Muntaner, 46</div><div class="t gt" style="left:724px;top:360px">Antonio</div><div class="abs cb" style="left:859px;top:360px"></div>
<div class="abs gh" style="left:181px;top:377px;width:16px;height:21px;background:#eef0f3"></div><div class="abs gc" style="left:197px;top:377px;width:40px"></div><div class="abs gc" style="left:237px;top:377px;width:137px"></div><div class="abs gc" style="left:374px;top:377px;width:88px"></div><div class="abs gc" style="left:462px;top:377px;width:52px"></div><div class="abs gc" style="left:514px;top:377px;width:87px"></div><div class="abs gc" style="left:601px;top:377px;width:119px"></div><div class="abs gc" style="left:720px;top:377px;width:101px"></div><div class="abs gc" style="left:821px;top:377px;width:75px"></div><div class="t gt" style="left:241px;top:381px">Diagonal, 444</div><div class="t gt" style="left:724px;top:381px">David</div><div class="abs cb" style="left:859px;top:381px"></div>
<div class="abs gh" style="left:181px;top:398px;width:16px;height:21px;background:#eef0f3"></div><div class="abs gc" style="left:197px;top:398px;width:40px"></div><div class="abs gc" style="left:237px;top:398px;width:137px"></div><div class="abs gc" style="left:374px;top:398px;width:88px"></div><div class="abs gc" style="left:462px;top:398px;width:52px"></div><div class="abs gc" style="left:514px;top:398px;width:87px"></div><div class="abs gc" style="left:601px;top:398px;width:119px"></div><div class="abs gc" style="left:720px;top:398px;width:101px"></div><div class="abs gc" style="left:821px;top:398px;width:75px"></div><div class="t gt" style="left:241px;top:402px">Marina, 262</div><div class="t gt" style="left:724px;top:402px">David</div><div class="abs cb" style="left:859px;top:402px"></div>
<div class="abs" style="left:197px;top:293px;width:694px;height:20px;border-top:1px dotted #111;border-bottom:1px dotted #111;border-left:1px dotted #111"></div>
<svg style="left:187px;top:300px" width="4" height="7"><path d="M0 0v7l4-3.500z" fill="#777"/></svg>
<!-- Buscar button magnifier -->
<svg style="left:612px;top:182px" width="24" height="22" viewBox="612 182 24 22">
<path d="M622.500 193.500l-5.500 4.800" stroke="#7a4a14" stroke-width="3.200" stroke-linecap="round"/>
<path d="M622.500 193.400l-5.400 4.700" stroke="#f08c1e" stroke-width="2" stroke-linecap="round"/>
<circle cx="626" cy="190.300" r="5.300" fill="url(#gLens)" stroke="#6a727c" stroke-width="1.300"/>
</svg>
<!-- hourglass -->
<svg style="left:211px;top:274px" width="11" height="15" viewBox="0 0 11 15"><path d="M.5 .5h10v2h-10zM.5 12.500h10v2h-10z" fill="#444" stroke="#222"/><path d="M1.500 2.500h8c0 3-3 4-3 5s3 2 3 5h-8c0-3 3-4 3-5s-3-2-3-5z" fill="#f4f4f4" stroke="#222"/><path d="M3 11.500l2.500-2.500 2.500 2.500z" fill="#555"/></svg>


<!-- top dropdown -->
<div class="abs menu" style="left:559px;top:123px;width:184px;height:52px"></div>
<div class="abs" style="left:588px;top:124px;width:1px;height:50px;background:#e2e4e8"></div>
<div class="abs mhot" style="left:561px;top:125px;width:180px;height:24px"></div>
<div class="t mi" style="left:594px;top:130px">Notificar masivamente</div>
<div class="t mi" style="left:594px;top:154px">Enviar documentación</div>
<div class="abs red" style="left:551px;top:116px;width:204px;height:39px"></div>
<!-- context menu -->
<div class="abs menu" style="left:334px;top:303px;width:212px;height:472px"></div>
<div class="abs" style="left:363px;top:304px;width:1px;height:470px;background:#e2e4e8"></div>
<div class="abs mhot" style="left:336px;top:458px;width:208px;height:24px"></div>
<div class="t mi" style="left:369px;top:310px">Nuevo</div>
<div class="t mi" style="left:369px;top:334px">Abrir...</div>
<div class="t mi" style="left:369px;top:358px">Informes</div>
<div class="t mi" style="left:369px;top:382px">Eliminar</div>
<div class="t mi" style="left:369px;top:409px">Actualizar</div>
<div class="t mi" style="left:369px;top:436px">Acceso web</div>
<div class="t mi" style="left:369px;top:463px">Procesos</div>
<div class="t mi" style="left:369px;top:487px">Incidencias y notificaciones</div>
<div class="t mi" style="left:369px;top:511px">Presupuestos</div>
<div class="t mi" style="left:369px;top:535px">Recibos</div>
<div class="t mi" style="left:369px;top:559px">Liquidaciones</div>
<div class="t mi" style="left:369px;top:583px">Facturas</div>
<div class="t mi" style="left:369px;top:607px">Cobros/Pagos comunitarios</div>
<div class="t mi" style="left:369px;top:631px">Cobros/Pagos individuales</div>
<div class="t mi" style="left:369px;top:655px">Revisiones y certificados</div>
<div class="t mi" style="left:369px;top:679px">Reuniones</div>
<div class="t mi" style="left:369px;top:703px">Traspasar dinero</div>
<div class="t mi" style="left:369px;top:727px">Actas</div>
<div class="t mi" style="left:369px;top:754px">Dar Baja</div>
<div class="abs msep" style="left:369px;top:402px;width:175px"></div>
<div class="abs msep" style="left:369px;top:429px;width:175px"></div>
<div class="abs msep" style="left:369px;top:456px;width:175px"></div>
<div class="abs msep" style="left:369px;top:747px;width:175px"></div>

<svg style="left:529px;top:361px" width="4" height="7"><path d="M0 0v7l4-3.500z" fill="#111"/></svg>
<svg style="left:529px;top:466px" width="4" height="7"><path d="M0 0v7l4-3.500z" fill="#111"/></svg>
<!-- submenu -->
<div class="abs menu" style="left:546px;top:458px;width:184px;height:52px"></div>
<div class="abs" style="left:575px;top:459px;width:1px;height:50px;background:#e2e4e8"></div>
<div class="abs mhot" style="left:548px;top:460px;width:180px;height:24px"></div>
<div class="t mi" style="left:581px;top:465px">Notificar masivamente</div>
<div class="t mi" style="left:581px;top:489px">Enviar documentación</div>
<div class="abs red" style="left:542px;top:451px;width:201px;height:38px"></div>

<svg style="left:0;top:0" width="891" height="882" viewBox="0 0 891 882">
<g transform="translate(574 137.2)" fill="none" stroke-linecap="round">
<circle r="6" fill="#ffd9a0" opacity=".35" stroke="none"/>
<path d="M-4.600 5.600A7.200 7.200 0 1 1 4.600 5.600" stroke="#f29436" stroke-width="1.800"/>
<path d="M-2.800 3.500A4.400 4.400 0 1 1 2.800 3.500" stroke="#ee862e" stroke-width="1.500"/>
<path d="M0 0v7" stroke="#e2b264" stroke-width="1.800" stroke-linecap="butt"/>
<circle r="1.500" fill="#c89040" stroke="none"/></g>
<g transform="translate(566.5 155)">
<path d="M.5 .5h3v10.500h-3z" fill="#fff" stroke="#a4a8b0" stroke-width=".9"/>
<path d="M4.500 .5h5l3 3v8h-8z" fill="#f4f5fa" stroke="#a4a8b0" stroke-width=".9"/>
<path d="M9.500 .5v3h3" fill="none" stroke="#a4a8b0" stroke-width=".9"/>
<rect x="5.500" y="5.500" width="10" height="7" fill="#fbfcfe" stroke="#7f8894" stroke-width="1"/>
<path d="M7 10.500h3" stroke="#7aa0d0" stroke-width="1"/><rect x="7" y="7.500" width="4" height="2" fill="#c8d8f0"/>
<rect x="12" y="7" width="2" height="2" fill="#a01828"/></g>
<g transform="translate(561 472.2)" fill="none" stroke-linecap="round">
<circle r="6" fill="#ffd9a0" opacity=".35" stroke="none"/>
<path d="M-4.600 5.600A7.200 7.200 0 1 1 4.600 5.600" stroke="#f29436" stroke-width="1.800"/>
<path d="M-2.800 3.500A4.400 4.400 0 1 1 2.800 3.500" stroke="#ee862e" stroke-width="1.500"/>
<path d="M0 0v7" stroke="#e2b264" stroke-width="1.800" stroke-linecap="butt"/>
<circle r="1.500" fill="#c89040" stroke="none"/></g>
<g transform="translate(553.5 490)">
<path d="M.5 .5h3v10.500h-3z" fill="#fff" stroke="#a4a8b0" stroke-width=".9"/>
<path d="M4.500 .5h5l3 3v8h-8z" fill="#f4f5fa" stroke="#a4a8b0" stroke-width=".9"/>
<path d="M9.500 .5v3h3" fill="none" stroke="#a4a8b0" stroke-width=".9"/>
<rect x="5.500" y="5.500" width="10" height="7" fill="#fbfcfe" stroke="#7f8894" stroke-width="1"/>
<path d="M7 10.500h3" stroke="#7aa0d0" stroke-width="1"/><rect x="7" y="7.500" width="4" height="2" fill="#c8d8f0"/>
<rect x="12" y="7" width="2" height="2" fill="#a01828"/></g>
<!-- Nuevo -->
<path d="M344 311h6.500l3 3v8.500h-9.500z" fill="#fff" stroke="#111" stroke-width="1.100"/><path d="M350.500 311v3h3" fill="none" stroke="#111" stroke-width="1"/>
<!-- Abrir -->
<path d="M341.500 346v-10.500c0-.7.400-1 1-1h3.800l1.400 1.700h6c.6 0 .9.300.9.900v1.900" fill="#f2c040" stroke="#b8860c"/>
<path d="M341.500 346l3-6.800h12.300l-3 6.800z" fill="url(#gFolder)" stroke="#b8860c"/>
<!-- Informes -->
<rect x="344.500" y="358.500" width="11" height="13" fill="#fdfdfd" stroke="#a0a6ae"/>
<path d="M342.800 360.500h2.500M342.800 362.500h2.500M342.800 364.500h2.500M342.800 366.500h2.500M342.800 368.500h2.500M342.800 370.500h2.500" stroke="#8a9098" stroke-width=".9"/>
<rect x="346.500" y="360.500" width="7.500" height="2.500" fill="#8cd09c" stroke="#4ca468" stroke-width=".7"/>
<path d="M346.500 365.500h8M346.500 367.500h8M346.500 369.500h8" stroke="#b0b6be" stroke-width="1" stroke-dasharray="2.500 1"/>
<!-- Eliminar -->
<path d="M344.300 384.800l9.200 9M353.500 384.800l-9.200 9" stroke="#c4121a" stroke-width="3.900"/><path d="M344.600 385.100l8.600 8.400M353.200 385.100l-8.600 8.400" stroke="#ee3840" stroke-width="2"/>
<!-- Actualizar -->
<circle cx="349" cy="415.800" r="7.400" fill="url(#gGreen)" stroke="#0a7410" stroke-width="1.400"/>
<path d="M345 414.500a4.500 4.500 0 0 1 7-2.500l1.500-1.500v4.800h-4.800l1.600-1.600a2.800 2.800 0 0 0-3.600 1.300zM353 417a4.500 4.500 0 0 1-7 2.500l-1.500 1.500v-4.800h4.800l-1.600 1.600a2.800 2.800 0 0 0 3.600-1.300z" fill="#d6fac4"/>
<!-- Acceso web -->
<circle cx="348.800" cy="442.400" r="7.300" fill="url(#gGlobe2)" stroke="#1c3f7c"/>
<ellipse cx="348.800" cy="438.400" rx="5.300" ry="2.600" fill="url(#gGloss)"/>
<rect x="345.500" y="442.500" width="11" height="8" fill="url(#gCard)" stroke="#5f80b8" stroke-width=".8"/>
<circle cx="348.600" cy="445" r="1.600" fill="#505056"/><ellipse cx="348.600" cy="448.300" rx="2.400" ry="1.600" fill="#e8641c"/>
<path d="M352 445.500h3.500M352 448h3.500" stroke="#8cb6ea" stroke-width="1.200"/>
<g transform="translate(349 469.8)">
<path d="M-1.20 -5.47L-0.95 -7.54L0.95 -7.54L1.20 -5.47L3.02 -4.72L4.66 -6.01L6.01 -4.66L4.72 -3.02L5.47 -1.20L7.54 -0.95L7.54 0.95L5.47 1.20L4.72 3.02L6.01 4.66L4.66 6.01L3.02 4.72L1.20 5.47L0.95 7.54L-0.95 7.54L-1.20 5.47L-3.02 4.72L-4.66 6.01L-6.01 4.66L-4.72 3.02L-5.47 1.20L-7.54 0.95L-7.54 -0.95L-5.47 -1.20L-4.72 -3.02L-6.01 -4.66L-4.66 -6.01L-3.02 -4.72z" fill="#c9d3f0" stroke="#7b8ac4" stroke-width=".9" stroke-linejoin="round"/>
<circle r="3.300" fill="#eef1fa" stroke="#7b8ac4" stroke-width=".9"/><circle r="1.500" fill="#f2e6a6" stroke="#8c94bc" stroke-width=".7"/></g>
<!-- Incidencias -->
<path d="M341.500 491l5.500-4.500 5.500 4.500v6.500h-11z" fill="#d0e6f8" stroke="#6aa4d8" stroke-width=".9"/>
<rect x="343.500" y="488" width="7" height="4" fill="#f4f8fc" stroke="#9ac0e0" stroke-width=".6"/>
<path d="M341.500 491l5.500 4 5.500-4" fill="none" stroke="#6aa4d8" stroke-width=".9"/>
<rect x="347.500" y="492.500" width="9.500" height="9.500" fill="#fafcfe" stroke="#5a8ed0"/>
<rect x="350" y="490.800" width="4.500" height="2.500" fill="#d8b878" stroke="#9a7a3a" stroke-width=".6"/>
<path d="M349 497l2.300 2.800 4.700-6" fill="none" stroke="#e01c24" stroke-width="1.600"/>
<!-- Presupuestos -->
<rect x="343.5" y="511.5" width="12" height="13" fill="#fdfdfd" stroke="#9aa0a8"/>
<rect x="345.5" y="513.5" width="8" height="3" fill="#7cc890" stroke="#3c9a58" stroke-width=".8"/>
<path d="M345 519h9M345 521.5h9M345 523.8h9" stroke="#a8aeb6" stroke-width="1" stroke-dasharray="3 1"/>
<g stroke="#a87410" stroke-width=".5"><ellipse cx="354" cy="525" rx="3" ry="1.400" fill="url(#gGold)"/><ellipse cx="354" cy="523" rx="3" ry="1.400" fill="url(#gGold)"/><ellipse cx="354" cy="521" rx="3" ry="1.400" fill="url(#gGold)"/><ellipse cx="354" cy="519" rx="3" ry="1.400" fill="url(#gGold)"/><ellipse cx="350" cy="525.500" rx="3" ry="1.400" fill="url(#gGold)"/><ellipse cx="350" cy="523.500" rx="3" ry="1.400" fill="url(#gGold)"/></g>
<!-- Recibos -->
<path d="M343.500 535l1-1 1 1 1-1 1 1 1-1 1 1 1-1 1 1 1-1 1 1v14.500h-10z" fill="#d4eee8" stroke="#4a6a64" stroke-width=".9"/>
<path d="M345.500 538.500h3M345.500 540.500h6M345.500 542.500h6M345.500 544.500h4M345.500 546.500h6" stroke="#4a9a8c" stroke-width="1"/>
<path d="M342.500 549.500h12" stroke="#2a3a38" stroke-width="1"/>
<!-- Liquidaciones -->
<rect x="343.5" y="558.5" width="12" height="13" fill="#fdfdfd" stroke="#9aa0a8"/>
<rect x="345.5" y="560.5" width="8" height="3" fill="#7cc890" stroke="#3c9a58" stroke-width=".8"/>
<path d="M345 566h9M345 568.5h9M345 570.8h9" stroke="#a8aeb6" stroke-width="1" stroke-dasharray="3 1"/>
<path d="M341.800 560.500h2.500M341.800 563h2.500M341.800 565.500h2.500M341.800 568h2.500M341.800 570.500h2.500" stroke="#8a9098" stroke-width=".9"/>
<circle cx="353" cy="569.500" r="4.300" fill="#f8a820" stroke="#c87808" stroke-width=".9"/><circle cx="353" cy="569.500" r="1.800" fill="#fdd060"/>
<!-- Facturas -->
<path d="M343.500 582.500h7.500l3 3v11h-10.500z" fill="#fbfbf6" stroke="#8a9098"/><path d="M351 582.500v3h3" fill="none" stroke="#8a9098" stroke-width=".8"/>
<path d="M345.500 587h5M345.500 589.500h6" stroke="#7a8a9a" stroke-width="1" stroke-dasharray="1.500 .8"/>
<rect x="345" y="591.500" width="7" height="3" fill="#dce8dc" stroke="#8aa08a" stroke-width=".6"/>
<g stroke="#a87410" stroke-width=".5"><ellipse cx="353.500" cy="597.500" rx="3" ry="1.300" fill="url(#gGold)"/><ellipse cx="353.500" cy="595.500" rx="3" ry="1.300" fill="url(#gGold)"/><ellipse cx="353.500" cy="593.500" rx="3" ry="1.300" fill="url(#gGold)"/><ellipse cx="349" cy="598" rx="3" ry="1.300" fill="url(#gGold)"/></g>
<!-- Cobros comunitarios (calculator) -->
<rect x="343.500" y="606.500" width="11" height="14.500" rx="1" fill="#bfe0f8" stroke="#2f8edc"/>
<rect x="345.500" y="608.500" width="7" height="3.500" fill="#ffffff" stroke="#6ab4ec" stroke-width=".6"/>
<path d="M345.500 614.500h7M345.500 616.800h7M345.500 619h7" stroke="#3f9ae2" stroke-width="1.200" stroke-dasharray="1.500 1.200"/>
<!-- Cobros individuales -->
<rect x="343.500" y="630.500" width="11" height="14.500" rx="1" fill="#bfe0f8" stroke="#2f8edc"/>
<rect x="345.500" y="632.500" width="7" height="3.500" fill="#ffffff" stroke="#6ab4ec" stroke-width=".6"/>
<path d="M345.500 638.500h4M345.500 640.800h4M345.500 643h4" stroke="#3f9ae2" stroke-width="1.200" stroke-dasharray="1.500 1.200"/>
<circle cx="353.300" cy="638" r="2.300" fill="#c8925a"/><path d="M352 635.800c.8-1.200 2.800-1 3.300.2l-.3 1.200c-1-.6-2-.8-3-.4z" fill="#5a3a20"/>
<path d="M348.800 646c0-3.500 2-5 4.500-5s4.500 1.500 4.500 5z" fill="#3a3f50"/><path d="M352.600 641.500l.7 3 .7-3z" fill="#c83020"/>
<!-- Revisiones -->
<rect x="344.5" y="655.5" width="12" height="13" fill="#fdfdfd" stroke="#9aa0a8"/>
<rect x="346.5" y="657.5" width="8" height="3" fill="#7cc890" stroke="#3c9a58" stroke-width=".8"/>
<path d="M346 663h9M346 665.5h9M346 667.8h9" stroke="#a8aeb6" stroke-width="1" stroke-dasharray="3 1"/>
<path d="M342.800 657.500h2.500M342.800 660h2.500M342.800 662.500h2.500M342.800 665h2.500M342.800 667.500h2.500" stroke="#8a9098" stroke-width=".9"/>
<path d="M352 662c2.300 0 2.900 2 2.900 4l1.400 2.600h-8.600l1.400-2.600c0-2 .6-4 2.900-4z" fill="#ffc428" stroke="#c88408" stroke-width=".7"/><circle cx="352" cy="669.600" r="1" fill="#333"/>
<!-- Reuniones -->
<circle cx="345.800" cy="681.500" r="2.300" fill="#e8b890"/><path d="M343.600 680.500c.4-2 3.800-2.200 4.400-.3-1.400-.3-3-.3-4.400.3z" fill="#b8782a"/>
<path d="M341 693.500c0-6 2-8.500 4.800-8.500 2.500 0 4 2 4.300 5.500l-1 3z" fill="#1c1c22"/>
<circle cx="352.800" cy="681.500" r="2.300" fill="#e8b890"/><path d="M350.600 680.800c.4-2.200 3.800-2.400 4.400-.3-1.400-.6-3-.5-4.400.3z" fill="#3a2a20"/>
<path d="M348.500 693.500c.3-5.500 1.800-8.500 4.300-8.500 2.800 0 4.700 2.500 4.700 8.500z" fill="#b81c28"/>
<path d="M341 693.800h16.500" stroke="#1c1c22" stroke-width="1"/>
<!-- Traspasar dinero -->
<path d="M341.500 717.500v-9.500l3-1.500v-3h8v3l3.500 1.500v9.500z" fill="#f0b860" stroke="#d09030" stroke-width=".9"/>
<path d="M344 714.500h10.500M344 711h3" stroke="#fbe4b0" stroke-width="1.600" stroke-dasharray="2 1"/>
<path d="M346 708h6.500v-2.200l4 3.400-4 3.400v-2.200h-6.500z" fill="#6cc048" stroke="#3c8c20" stroke-width=".7"/>
<!-- Actas -->
<rect x="342.500" y="726.500" width="12" height="15" fill="#5aaee8" stroke="#2a7cc8"/>
<rect x="344.500" y="728.500" width="8" height="11" fill="#e4f2fc"/>
<path d="M345.500 731h3.500M345.500 733.500h3.500M345.500 736h3.500M345.500 738.200h6" stroke="#5a90c8" stroke-width="1"/>
<circle cx="351.300" cy="731.500" r="2.200" fill="#f08020"/><path d="M350 733l-.3 4.500 1.600-1.200 1.600 1.200-.3-4.500z" fill="#e05a10"/>
</svg>


</body>
</html>
